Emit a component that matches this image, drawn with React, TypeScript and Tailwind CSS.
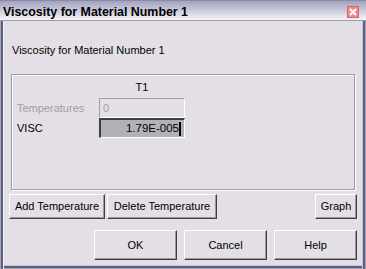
import React from "react";

const font = { fontFamily: '"Liberation Sans", Arial, sans-serif' };

function Btn({ w, h, children }: { w: string; h: string; children: React.ReactNode }) {
  return (
    <div
      className={`${w} ${h} flex items-center justify-center border-t border-l border-t-white border-l-white border-b border-r border-b-[#404040] border-r-[#404040] shadow-[inset_-1px_-1px_0_#9a98a0] text-[11px] leading-[13px] text-black`}
    >
      {children}
    </div>
  );
}

export default function App() {
  return (
    <div className="w-[366px] h-[269px] flex flex-col bg-[#e4dfe7] overflow-hidden" style={font}>
      {/* Title bar */}
      <div className="h-[20px] flex justify-between border-t border-t-[#8a8aa8] bg-gradient-to-b from-[#a3a2be] to-[#f5f5f9]">
        <div className="pl-[3px] pt-[4px] leading-[14px] text-[12.4px] font-bold text-black">
          Viscosity for Material Number 1
        </div>
        <div className="pr-[7px] pt-[5px]">
          <div className="w-[12px] h-[12px] bg-[#f08a86] border border-[#d06a6a] flex items-center justify-center">
            <svg width="8" height="8" viewBox="0 0 8 8">
              <path d="M1 1 L7 7 M7 1 L1 7" stroke="white" strokeWidth="2" />
            </svg>
          </div>
        </div>
      </div>
      <div className="h-[1px] bg-[#9c9aae]" />
      {/* Body */}
      <div className="flex-1 flex flex-col px-[11px] shadow-[inset_1px_0_0_#a5a5bd,inset_3px_0_0_#5d5d7d,inset_4px_0_0_#f2f0f5,inset_-1px_0_0_#a5a5bd,inset_-3px_0_0_#5d5d7d,inset_-4px_0_0_#c8c6d0,inset_0_-1px_0_#a5a5bd,inset_0_-3px_0_#5d5d7d,inset_0_-4px_0_#c8c6d0]">
        <div className="mt-[23px] pl-[1px] text-[11px] leading-[13px] text-black">
          Viscosity for Material Number 1
        </div>
        {/* Group box */}
        <div className="mt-[17px] h-[116px] border border-[#9d9ba5] shadow-[inset_1px_1px_0_#ffffff,1px_1px_0_#ffffff] pl-[5px] pt-[6px]">
          <div className="flex">
            <div className="w-[82px]" />
            <div className="w-[86px] text-center text-[11px] leading-[13px] text-black">T1</div>
          </div>
          <div className="mt-[4px] flex items-center h-[20px]">
            <div className="w-[82px] text-[11px] leading-[13px] text-[#a09ea6]">Temperatures</div>
            <div className="w-[86px] h-[20px] border-t border-l border-[#a09ea6] border-b border-r border-b-white border-r-white flex items-center pl-[3px] text-[11px] text-[#a09ea6]">
              0
            </div>
          </div>
          <div className="flex items-center h-[20px]">
            <div className="w-[82px] text-[11px] leading-[13px] text-black">VISC</div>
            <div className="w-[86px] h-[20px] border-t-2 border-l-2 border-t-[#404040] border-l-[#404040] border-b border-r border-b-white border-r-white bg-[#b2b0b8] flex items-center justify-end pr-[3px] text-[11.5px] text-black">
              <span>1.79E-005</span>
              <span className="w-[2px] h-[14px] bg-black" />
            </div>
          </div>
        </div>
        {/* Button row */}
        <div className="mt-[4px] -mx-[2px] flex">
          <Btn w="w-[96px]" h="h-[25px]">Add Temperature</Btn>
          <div className="w-[2px]" />
          <Btn w="w-[110px]" h="h-[25px]">Delete Temperature</Btn>
          <div className="flex-1" />
          <Btn w="w-[42px]" h="h-[25px]">Graph</Btn>
        </div>
        {/* Bottom buttons */}
        <div className="mt-[11px] -mr-[2px] flex justify-end gap-[7px]">
          <Btn w="w-[83px]" h="h-[30px]">OK</Btn>
          <Btn w="w-[83px]" h="h-[30px]">Cancel</Btn>
          <Btn w="w-[83px]" h="h-[30px]">Help</Btn>
        </div>
      </div>
    </div>
  );
}
